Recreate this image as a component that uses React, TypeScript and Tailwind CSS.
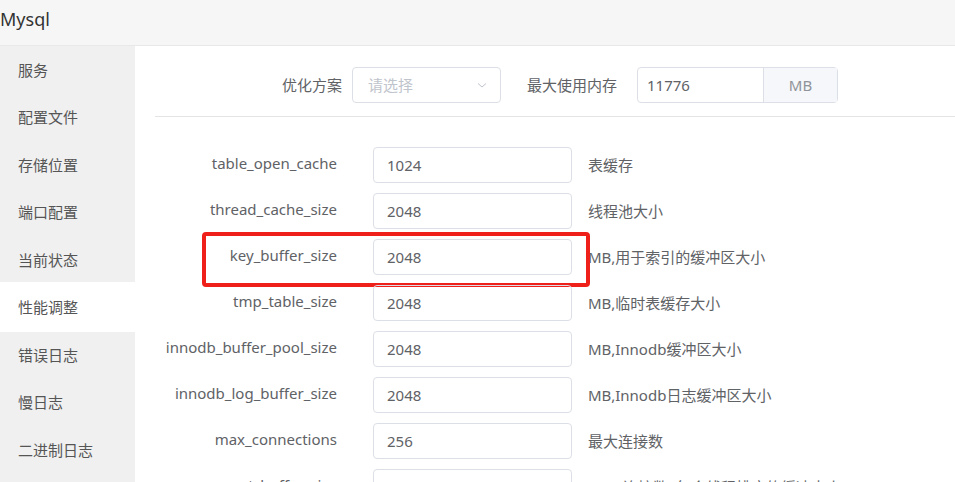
import React from 'react';

const menu = ['服务', '配置文件', '存储位置', '端口配置', '当前状态', '性能调整', '错误日志', '慢日志', '二进制日志'];

const rows = [
  { name: 'table_open_cache', value: '1024', desc: '表缓存' },
  { name: 'thread_cache_size', value: '2048', desc: '线程池大小' },
  { name: 'key_buffer_size', value: '2048', desc: 'MB,用于索引的缓冲区大小', marked: true },
  { name: 'tmp_table_size', value: '2048', desc: 'MB,临时表缓存大小' },
  { name: 'innodb_buffer_pool_size', value: '2048', desc: 'MB,Innodb缓冲区大小' },
  { name: 'innodb_log_buffer_size', value: '2048', desc: 'MB,Innodb日志缓冲区大小' },
  { name: 'max_connections', value: '256', desc: '最大连接数' },
  { name: 'sort_buffer_size', value: '2048', desc: 'KB * 连接数, 每个线程排序的缓冲大小' },
];

const font = { fontFamily: '"Noto Sans", "Noto Sans CJK SC", sans-serif' };

export default function App() {
  return (
    <div className="h-[482px] w-[955px] overflow-hidden bg-white text-[15px] text-[#606266]" style={font}>
      {/* header */}
      <div className="flex h-[46px] items-center border-b border-[#e8e8e8] bg-[#f6f6f6]">
        <span className="-mt-[6px] text-[18px] text-[#333]">Mysql</span>
      </div>

      <div className="flex">
        {/* sidebar */}
        <div className="flex h-[436px] w-[135px] shrink-0 flex-col bg-[#f0f0f0]">
          {menu.map((m) => (
            <div
              key={m}
              className={
                m === '性能调整'
                  ? '-my-[1.25px] flex h-[50px] shrink-0 items-center bg-white pl-[18px] text-[#555]'
                  : 'flex h-[47.5px] shrink-0 items-center pl-[18px] text-[#555]'
              }
            >
              {m}
            </div>
          ))}
        </div>

        {/* main */}
        <div className="flex-1 pl-[20px]">
          <div className="flex h-[71px] items-center border-b border-[#e4e4e4] pl-[127px] pt-[8px]">
            <span>优化方案</span>
            <div className="ml-[10px] flex h-[36px] w-[149px] items-center justify-between rounded-[4px] border border-[#dcdfe6] pl-[15px] pr-[12px]">
              <span className="text-[#c0c4cc]">请选择</span>
              <svg width="12" height="12" viewBox="0 0 12 12" fill="none">
                <path d="M2 4.5 L6 8 L10 4.5" stroke="#c0c4cc" strokeWidth="1" />
              </svg>
            </div>
            <span className="ml-[26px]">最大使用内存</span>
            <div className="ml-[20px] flex h-[36px] rounded-[4px] border border-[#dcdfe6]">
              <div className="flex w-[125px] items-center pl-[9px]">11776</div>
              <div className="flex w-[74px] items-center justify-center border-l border-[#dcdfe6] bg-[#f5f7fa] text-[#909399]">
                MB
              </div>
            </div>
          </div>

          <div className="flex flex-col gap-[10px] pt-[30px]">
            {rows.map((r) => (
              <div key={r.name} className="relative flex h-[36px] items-center">
                {r.marked && (
                  <div className="absolute -top-[7px] left-[47px] h-[55px] w-[388px] rounded-[4px] border-[4px] border-[#ef1f1a]" />
                )}
                <div className="w-[182px] -mt-[3px] text-right">{r.name}</div>
                <div className="ml-[36px] flex h-[36px] w-[199px] items-center rounded-[4px] border border-[#dcdfe6] pl-[13px]">
                  {r.value}
                </div>
                <div className="ml-[16px] whitespace-nowrap">{r.desc}</div>
              </div>
            ))}
          </div>
        </div>
      </div>
    </div>
  );
}
